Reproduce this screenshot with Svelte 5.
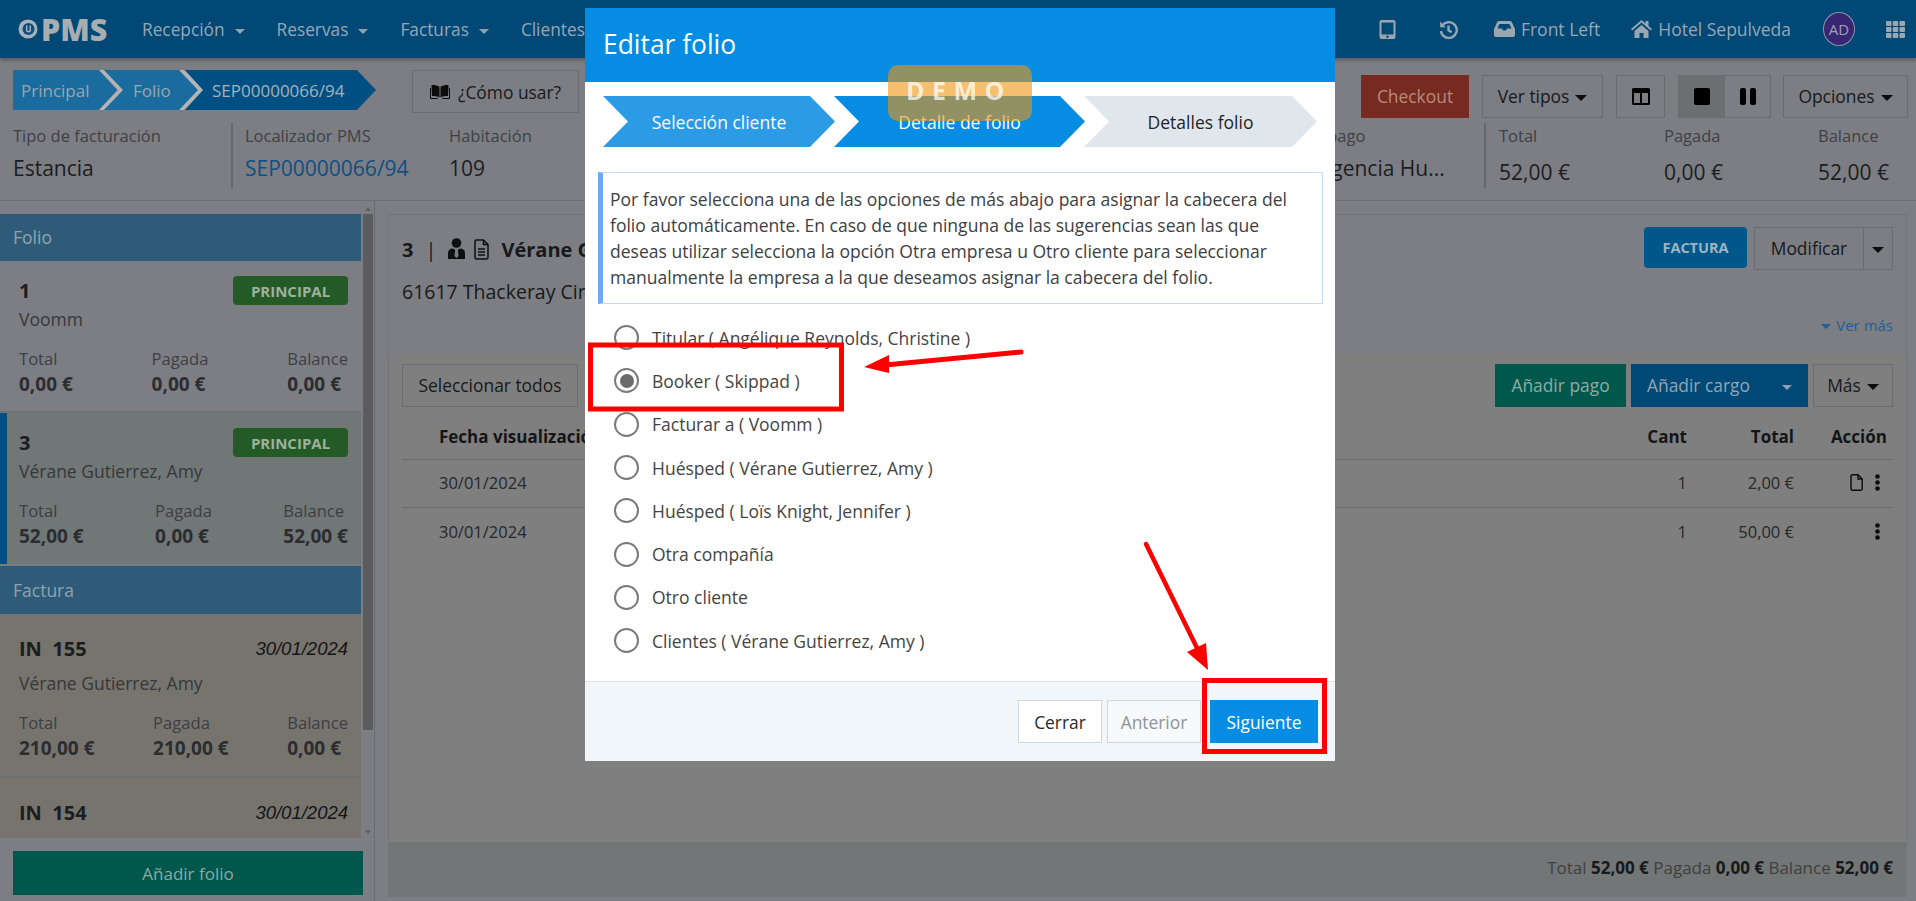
<script>
  const menu = ['Recepción', 'Reservas', 'Facturas'];
  const options = [
    'Titular ( Angélique Reynolds, Christine )',
    'Booker ( Skippad )',
    'Facturar a ( Voomm )',
    'Huésped ( Vérane Gutierrez, Amy )',
    'Huésped ( Loïs Knight, Jennifer )',
    'Otra compañía',
    'Otro cliente',
    'Clientes ( Vérane Gutierrez, Amy )'
  ];
  const folios = [
    { n: '1', name: 'Voomm', total: '0,00 €', paid: '0,00 €', bal: '0,00 €', active: false },
    { n: '3', name: 'Vérane Gutierrez, Amy', total: '52,00 €', paid: '0,00 €', bal: '52,00 €', active: true }
  ];
  const rows = [
    { qty: '1', total: '2,00 €', file: true },
    { qty: '1', total: '50,00 €', file: false }
  ];
</script>

<div class="app">
  <header class="nav">
    <div class="logo">
      <svg width="20" height="20" viewBox="0 0 20 20"><circle cx="10" cy="10" r="9.500" fill="#aab0b6"/><circle cx="10.500" cy="10" r="6" fill="#0a4f7e"/><path d="M8 6.500v4.500a2.500 2.500 0 0 0 5 0V6.500h-1.400v4.500a1.100 1.100 0 0 1-2.200 0V6.500z" fill="#aab0b6"/></svg>
      <span>PMS</span>
    </div>
    <nav class="menu">
      {#each menu as m}<span class="menu-item">{m}<i class="caret light"></i></span>{/each}
      <span class="menu-item">Clientes</span>
    </nav>
    <div class="nav-right">
      <svg class="tablet" width="17" height="19" viewBox="0 0 17 19"><path fill="#9aa6b0" fill-rule="evenodd" d="M2.500 0h12A2 2 0 0 1 16.500 2v15a2 2 0 0 1-2 2h-12a2 2 0 0 1-2-2V2a2 2 0 0 1 2-2zM2.500 2.500v12h12v-12zM8.500 15.500a1.200 1.200 0 1 0 0 2.400 1.200 1.200 0 0 0 0-2.400z"/></svg>
      <svg class="hist" width="19" height="19" viewBox="0 0 24 24" fill="none" stroke="#9aa6b0" stroke-width="3"><path d="M4.500 6.500A10 10 0 1 1 2.500 14"/><path d="M1.500 2v7h7z" fill="#9aa6b0" stroke="none"/><path d="M12 7v6l4 2.500"/></svg>
      <span class="nav-txt front"><svg width="21" height="16" viewBox="0 0 21 16"><path fill="#9aa6b0" fill-rule="evenodd" d="M5 0h11c.8 0 1.400.4 1.800 1.100L21 8v6a2 2 0 0 1-2 2H2a2 2 0 0 1-2-2V8l3.200-6.900C3.600.4 4.200 0 5 0zM5.500 3L3.500 7.500h4.500l1.200 2h2.600l1.200-2h4.500L15.500 3z"/></svg>Front Left</span>
      <span class="nav-txt hotel"><svg width="21" height="18" viewBox="0 0 21 18"><path fill="#9aa6b0" d="M10.500 0L0 9l1.200 1.400L10.500 2.600l9.300 7.800L21 9l-3.500-3V1h-3v2.500zM3.500 11v7h5v-5h4v5h5v-7l-7-6z"/></svg>Hotel Sepulveda</span>
      <span class="avatar">AD</span>
      <svg class="grid-ic" width="19" height="17" viewBox="0 0 19 17"><g fill="#9aa6b0"><rect width="5.500" height="5" rx="1"/><rect x="6.750" width="5.500" height="5" rx="1"/><rect x="13.500" width="5.500" height="5" rx="1"/><rect y="6" width="5.500" height="5" rx="1"/><rect x="6.750" y="6" width="5.500" height="5" rx="1"/><rect x="13.500" y="6" width="5.500" height="5" rx="1"/><rect y="12" width="5.500" height="5" rx="1"/><rect x="6.750" y="12" width="5.500" height="5" rx="1"/><rect x="13.500" y="12" width="5.500" height="5" rx="1"/></g></svg>
    </div>
  </header>

  <section class="sub">
    <div class="toolbar">
      <div class="crumbs">
        <span class="crumb c1">Principal</span>
        <i class="sep s-a"></i>
        <span class="crumb c2">Folio</span>
        <i class="sep s-b"></i>
        <span class="crumb c3">SEP00000066/94</span>
      </div>
      <button class="btn how">
        <svg width="20" height="14" viewBox="0 0 20 14"><path fill="#0c0c0c" d="M1.500 0C4 0 7.500.3 9.500 1.800V12.500C7.500 11.300 4.500 11 2 11zM18.500 0C16 0 12.500.3 10.500 1.800V12.500c2-1.200 5-1.500 7.500-1.500z"/><path fill="none" stroke="#0c0c0c" d="M.5 3v10.500h7M19.500 3v10.500h-7"/></svg>
        ¿Cómo usar?
      </button>
      <div class="tools">
        <button class="btn checkout">Checkout</button>
        <button class="btn vt">Ver tipos<i class="caret"></i></button>
        <button class="btn ic">
          <svg width="18" height="17" viewBox="0 0 18 17"><path fill="#000" fill-rule="evenodd" d="M1.500 0h15A1.500 1.500 0 0 1 18 1.500v14a1.500 1.500 0 0 1-1.500 1.500h-15A1.500 1.500 0 0 1 0 15.500v-14A1.500 1.500 0 0 1 1.500 0zM2 5v10h6V5zM10 5v10h6V5z"/></svg>
        </button>
        <div class="group">
          <button class="btn g1"><span class="square"></span></button>
          <button class="btn g2"><span class="bar"></span><span class="bar"></span></button>
        </div>
        <button class="btn op">Opciones<i class="caret"></i></button>
      </div>
    </div>
    <div class="info">
      <div class="cell tipo"><small>Tipo de facturación</small><b>Estancia</b></div>
      <div class="cell loc"><small>Localizador PMS</small><b class="link">SEP00000066/94</b></div>
      <div class="cell hab"><small>Habitación</small><b>109</b></div>
      <div class="cell pago"><small>Tipo de pago</small><b>Agencia Hu...</b></div>
      <div class="cell tot"><small>Total</small><b>52,00 €</b></div>
      <div class="cell pag"><small>Pagada</small><b>0,00 €</b></div>
      <div class="cell bal"><small>Balance</small><b>52,00 €</b></div>
    </div>
  </section>

  <div class="body">
    <aside class="side">
      <div class="list">
        <h4>Folio</h4>
        {#each folios as f}
          <article class="card folio" class:active={f.active}>
            <div class="top"><strong>{f.n}</strong><span class="badge">PRINCIPAL</span></div>
            <div class="who">{f.name}</div>
            <div class="nums">
              <div><small>Total</small><b>{f.total}</b></div>
              <div><small>Pagada</small><b>{f.paid}</b></div>
              <div><small>Balance</small><b>{f.bal}</b></div>
            </div>
          </article>
        {/each}
        <h4 class="fact">Factura</h4>
        <article class="card inv">
          <div class="top"><strong>IN&nbsp; 155</strong><em>30/01/2024</em></div>
          <div class="who">Vérane Gutierrez, Amy</div>
          <div class="nums">
            <div><small>Total</small><b>210,00 €</b></div>
            <div><small>Pagada</small><b>210,00 €</b></div>
            <div><small>Balance</small><b>0,00 €</b></div>
          </div>
        </article>
        <article class="card inv last">
          <div class="top"><strong>IN&nbsp; 154</strong><em>30/01/2024</em></div>
        </article>
      </div>
      <div class="scroll"><i class="up"></i><span class="thumb"></span><i class="down"></i></div>
      <button class="add">Añadir folio</button>
    </aside>

    <main class="panel">
      <div class="p-top">
        <div class="p-head">
          <div class="title">
            <span>3</span><span class="pipe">|</span>
            <svg width="17" height="22" viewBox="0 0 17 22"><circle cx="8.500" cy="5" r="4.800" fill="#0e0f11"/><path fill="#0e0f11" d="M0 21v-6c0-3 2-4.500 5-4.500l2.200 1.500L6.500 18 8.500 20l2-2-.7-6L12 10.500c3 0 5 1.500 5 4.500v6z"/></svg>
            <svg width="15" height="21" viewBox="0 0 15 21" fill="none" stroke="#0e0f11" stroke-width="1.500"><path d="M1 2.500A1.500 1.500 0 0 1 2.500 1H9.500L14 5.500V18.500A1.500 1.500 0 0 1 12.500 20h-10A1.500 1.500 0 0 1 1 18.500z"/><path d="M9.500 1v4.500H14M4 10h7M4 13h7M4 16h7"/></svg>
            <span class="nm">Vérane Gutierrez</span>
          </div>
          <div class="p-actions">
            <button class="factura">FACTURA</button>
            <div class="split"><button class="btn mod">Modificar</button><button class="btn mc"><i class="caret"></i></button></div>
          </div>
        </div>
        <div class="addr">61617 Thackeray Circle</div>
        <div class="more"><i class="caret blue"></i>Ver más</div>
      </div>
      <div class="p-bottom">
        <div class="p-tools">
          <button class="btn sel">Seleccionar todos</button>
          <div class="p-right">
            <button class="pay">Añadir pago</button>
            <button class="charge">Añadir cargo<i class="caret light"></i></button>
            <button class="btn mas">Más<i class="caret"></i></button>
          </div>
        </div>
        <div class="table">
          <div class="tr th"><span></span><span>Fecha visualización</span><span class="r">Cant</span><span class="r">Total</span><span class="r act">Acción</span></div>
          {#each rows as r}
            <div class="tr">
              <span></span><span>30/01/2024</span><span class="r">{r.qty}</span><span class="r">{r.total}</span>
              <span class="icons">
                {#if r.file}
                  <svg width="13" height="17" viewBox="0 0 13 17" fill="none" stroke="#0b0b0b" stroke-width="1.400"><path d="M1 2A1.300 1.300 0 0 1 2.300.8H8L12.200 5V15A1.300 1.300 0 0 1 11 16.200H2.300A1.300 1.300 0 0 1 1 15z"/><path d="M8 .8V5H12.200"/></svg>
                {/if}
                <svg width="5" height="17" viewBox="0 0 5 17" fill="#0b0b0b"><circle cx="2.500" cy="2.500" r="2.300"/><circle cx="2.500" cy="8.500" r="2.300"/><circle cx="2.500" cy="14.500" r="2.300"/></svg>
              </span>
            </div>
          {/each}
        </div>
        <div class="p-foot">Total <b>52,00 €</b> Pagada <b>0,00 €</b> Balance <b>52,00 €</b></div>
      </div>
    </main>
  </div>

  <div class="modal">
    <div class="m-head">Editar folio</div>
    <div class="steps">
      <div class="step s1">Selección cliente</div>
      <div class="step s2">Detalle de folio</div>
      <div class="step s3">Detalles folio</div>
    </div>
    <p class="note">Por favor selecciona una de las opciones de más abajo para asignar la cabecera del folio automáticamente. En caso de que ninguna de las sugerencias sean las que deseas utilizar selecciona la opción Otra empresa u Otro cliente para seleccionar manualmente la empresa a la que deseamos asignar la cabecera del folio.</p>
    <div class="opts">
      {#each options as o, i}
        <div class="opt"><span class="radio" class:on={i === 1}></span>{o}</div>
      {/each}
    </div>
    <div class="m-foot">
      <button class="mb">Cerrar</button>
      <button class="mb off">Anterior</button>
      <button class="mb next">Siguiente</button>
    </div>
  </div>

  <div class="demo">D E M O</div>

  <svg class="marks" width="1916" height="901" viewBox="0 0 1916 901">
    <rect x="590.500" y="345" width="251" height="64" fill="none" stroke="#fe0000" stroke-width="5"/>
    <rect x="1204.500" y="680.500" width="120" height="71" fill="none" stroke="#fe0000" stroke-width="5"/>
    <path d="M1021 352L885 365" stroke="#fe0000" stroke-width="5" stroke-linecap="round"/>
    <path d="M864 367L889 355V373z" fill="#fe0000"/>
    <path d="M1146 544L1198 650" stroke="#fe0000" stroke-width="4.500" stroke-linecap="round"/>
    <path d="M1208 670L1187 652L1206 643z" fill="#fe0000"/>
  </svg>
</div>

<style>
  :global(body) { margin: 0; background: #7d7e83; }
  * { box-sizing: border-box; }
  .app { width: 1916px; height: 901px; overflow: hidden; position: relative; font-family: "Open Sans", "Noto Sans", sans-serif; font-size: 16.500px; color: #1b1d20; background: #7d7e83; }
  button { font-family: inherit; font-size: 17.400px; cursor: pointer; }
  h4 { margin: 0; font-weight: 400; }
  .caret { display: inline-block; width: 0; height: 0; border-left: 6px solid transparent; border-right: 6px solid transparent; border-top: 6px solid #0d0d0d; margin-left: 6px; vertical-align: 2px; }
  .caret.light { border-top-color: #8fa0ae; border-left-width: 5px; border-right-width: 5px; border-top-width: 5px; margin-left: 10px; }
  .caret.blue { border-top-color: #1f5f95; border-left-width: 5px; border-right-width: 5px; border-top-width: 5px; margin: 0 5px 0 0; }

  .nav { height: 58px; background: #004876; display: flex; align-items: center; box-shadow: 0 2px 4px rgba(0,0,0,.3); position: relative; color: #99a7b3; padding-left: 18px; }
  .logo { display: flex; align-items: center; gap: 3px; width: 124px; }
  .logo span { font-size: 30.500px; font-weight: 800; color: #a8adb2; line-height: 34px; }
  .menu { display: flex; gap: 32px; }
  .menu-item { font-size: 17.300px; white-space: nowrap; }
  .nav-right { margin-left: auto; display: flex; align-items: center; }
  .tablet { margin-right: 43px; }
  .hist { margin-right: 36px; }
  .nav-txt { display: inline-flex; align-items: center; gap: 6px; font-size: 17.500px; white-space: nowrap; }
  .front { margin-right: 31px; }
  .hotel { margin-right: 32px; }
  .avatar { width: 32px; height: 34px; border-radius: 50%; background: #382672; border: 1.500px solid #8f95a0; color: #9f9db8; font-size: 15px; display: flex; align-items: center; justify-content: center; margin-right: 31px; }
  .grid-ic { margin-right: 11px; }

  .sub { height: 143px; border-bottom: 1px solid #6e6f72; padding: 0 8px 0 13px; }
  .toolbar { height: 65px; display: flex; align-items: flex-start; }
  .crumbs { display: flex; margin-top: 12px; height: 40px; width: 363px; }
  .crumb { height: 40px; display: flex; align-items: center; font-size: 17px; color: #9aa5ae; }
  .sep { height: 40px; width: 25px; background: #b2b3b6; flex: none; clip-path: polygon(0 0, 5px 0, 25px 50%, 5px 100%, 0 100%, 19px 50%); }
  .s-a { margin: 0 -24px 0 -18px; }
  .s-b { margin: 0 -24px 0 -19px; }
  .c1 { width: 104px; padding-left: 8px; background: #1a6c9f; clip-path: polygon(0 0, 86px 0, 104px 50%, 86px 100%, 0 100%); }
  .c2 { width: 94px; margin-left: 4px; padding-left: 29px; background: #1a6c9f; clip-path: polygon(0 0, 76px 0, 94px 50%, 76px 100%, 0 100%, 19px 50%); }
  .c3 { width: 191px; margin-left: 5px; padding-left: 27px; background: #004f83; color: #a8b2ba; clip-path: polygon(0 0, 172px 0, 191px 50%, 172px 100%, 0 100%, 18px 50%); }
  .btn { background: transparent; border: 1px solid #6c6d70; color: #17191b; height: 43px; padding: 0 0 2px; white-space: nowrap; }
  .how { margin: 12px 0 0 36px; width: 167px; height: 43px; padding: 0; display: flex; align-items: center; justify-content: center; gap: 8px; }
  .tools { margin-left: auto; display: flex; margin-top: 17px; height: 43px; }
  .checkout { width: 108px; border: 0; background: #762a20; color: #b58a7e; margin-right: 13px; }
  .vt { width: 121px; margin-right: 13px; }
  .ic { width: 49px; margin-right: 13px; display: flex; align-items: center; justify-content: center; padding: 0; }
  .group { display: flex; width: 93px; margin-right: 12px; }
  .g1 { width: 47px; background: #6d6e70; display: flex; align-items: center; justify-content: center; padding: 0; }
  .g2 { width: 46px; border-left: 0; display: flex; align-items: center; justify-content: center; gap: 4px; padding: 0; }
  .square { width: 16px; height: 17px; background: #000; border-radius: 2px; }
  .bar { width: 6px; height: 17px; background: #000; border-radius: 2px; }
  .op { width: 125px; }
  .info { display: flex; height: 65px; }
  .cell { display: flex; flex-direction: column; flex: none; }
  .cell small { font-size: 16.500px; color: #3e4145; line-height: 26px; white-space: nowrap; }
  .cell b { font-weight: 400; font-size: 21px; line-height: 32px; margin-top: 3px; white-space: nowrap; }
  .link { color: #0f4f85; }
  .tipo { width: 218px; }
  .loc { width: 218px; border-left: 2px solid #67686b; padding-left: 12px; }
  .hab { width: 869px; }
  .pago { width: 166px; }
  .pago small { margin-left: -52px; }
  .tot { width: 180px; border-left: 2px solid #67686b; padding-left: 13px; }
  .pag { width: 154px; }
  .bal { width: 90px; }
  .tot b, .pag b, .bal b { margin-top: 7px; }

  .body { display: flex; height: 700px; }
  .side { width: 375px; flex: none; border-right: 1px solid #6c6d70; position: relative; padding-top: 13px; }
  .list { width: 361px; height: 625px; overflow: hidden; }
  h4 { height: 47px; background: #2e5c78; color: #92a3ae; font-size: 17.500px; line-height: 46px; padding-left: 13px; }
  .fact { height: 48px; line-height: 48px; }
  .card { padding: 15px 13px 0 19px; height: 152px; border-bottom: 2px solid #6f7174; }
  .folio.active { background: #717676; box-shadow: inset 7px 0 0 #004f82; height: 153px; border-bottom-color: #777c7c; }
  .top { display: flex; justify-content: space-between; align-items: center; height: 29px; }
  .top strong { font-size: 20px; font-weight: 700; color: #1b1d20; }
  .badge { width: 115px; height: 29px; border-radius: 4px; background: #235a25; color: #9fb09f; font-size: 15px; font-weight: 700; display: flex; align-items: center; justify-content: center; }
  .who { font-size: 17.500px; color: #35383b; line-height: 29px; }
  .nums { display: flex; justify-content: space-between; margin-top: 11px; }
  .nums small { display: block; font-size: 16.600px; color: #3c3f43; line-height: 27px; }
  .nums b { display: block; font-size: 19px; font-weight: 700; color: #2b2d30; line-height: 24px; }
  .inv { background: #77746e; height: 164px; padding-top: 20px; }
  .inv .who { margin-top: 6px; }
  .inv.last { height: 60px; border: 0; }
  .top em { font-family: "Liberation Sans", sans-serif; font-size: 18.500px; color: #141517; }
  .scroll { position: absolute; left: 363px; top: 0; width: 11px; height: 636px; }
  .thumb { position: absolute; left: 0; top: 13px; width: 10px; height: 516px; background: #5c5c5f; }
  .up, .down { position: absolute; left: 2px; width: 0; height: 0; border-left: 3.500px solid transparent; border-right: 3.500px solid transparent; }
  .up { top: 6px; border-bottom: 4px solid #5e5f62; }
  .down { top: 629px; border-top: 4px solid #5e5f62; }
  .add { position: absolute; left: 13px; top: 650px; width: 350px; height: 44px; border: 0; background: #00584c; color: #8fa8a3; font-size: 17px; }

  .panel { width: 1519px; margin: 13px 0 4px 13px; border: 1px solid #747578; background: #7f7f7f; display: flex; flex-direction: column; }
  .p-top { height: 139px; padding: 12px 13px 0; background: #7d7e83; }
  .p-head { display: flex; justify-content: space-between; height: 42px; }
  .title { display: flex; align-items: center; font-size: 20px; font-weight: 700; gap: 10px; height: 44px; color: #17191b; }
  .pipe { font-weight: 400; margin: 0 2px; }
  .title svg + svg { margin-left: -1px; }
  .nm { margin-left: 2px; }
  .p-actions { display: flex; gap: 7px; }
  .factura { width: 103px; height: 41px; border: 0; border-radius: 4px; background: #00588a; color: #9fb4c2; font-size: 14.500px; font-weight: 700; }
  .split { display: flex; }
  .mod { width: 110px; }
  .mc { width: 29px; border-left: 0; }
  .mc .caret { margin: 0; }
  .addr { font-size: 19.500px; margin-top: 10px; line-height: 26px; color: #17191b; white-space: nowrap; }
  .more { text-align: right; color: #1f5f95; font-size: 15px; margin-top: 9px; line-height: 22px; }
  .p-bottom { flex: 1; display: flex; flex-direction: column; }
  .p-tools { display: flex; justify-content: space-between; margin: 10px 13px 0; }
  .sel { width: 176px; }
  .p-right { display: flex; gap: 5px; }
  .pay { width: 131px; height: 43px; border: 0; background: #00584c; color: #91a9a3; padding: 0 0 2px; }
  .charge { width: 177px; height: 43px; border: 0; background: #004876; color: #93a5b2; text-align: left; padding: 0 0 2px 16px; white-space: nowrap; }
  .charge .caret { margin-left: 32px; }
  .mas { width: 80px; }
  .table { margin: 6px 13px 0; }
  .tr { display: grid; grid-template-columns: 37px 1fr 100px 107px 99px; height: 48px; align-items: center; border-bottom: 1px solid #6b6c6e; color: #26282b; padding-bottom: 2px; }
  .tr:last-child { border-bottom: 0; }
  .th { height: 47px; font-weight: 700; font-size: 17px; color: #141517; white-space: nowrap; padding-bottom: 0; }
  .r { text-align: right; }
  .act { padding-right: 6px; }
  .icons { display: flex; justify-content: flex-end; align-items: center; gap: 12px; padding-right: 13px; }
  .p-foot { margin-top: auto; height: 54px; background: #727676; text-align: right; line-height: 52px; padding-right: 13px; color: #403f3e; font-size: 17px; }
  .p-foot b { color: #17191b; }

  .modal { position: absolute; left: 585px; top: 8px; width: 750px; height: 753px; background: #fff; display: flex; flex-direction: column; color: #333; }
  .m-head { height: 74px; background: #068de3; color: #fff; font-size: 26.400px; line-height: 72px; padding-left: 18px; }
  .steps { display: flex; margin: 14px 0 0 18px; }
  .step { height: 51px; display: flex; align-items: center; justify-content: center; font-size: 17.500px; margin-right: -1px; clip-path: polygon(0 0, calc(100% - 25px) 0, 100% 50%, calc(100% - 25px) 100%, 0 100%, 25px 50%); }
  .s1 { width: 232px; background: #2b9be6; color: #fff; }
  .s2 { width: 251px; background: #068de3; color: #fff; }
  .s3 { width: 233px; background: #dfe7ec; color: #1f2326; }
  .note { margin: 25px 12px 0 13px; height: 132px; padding: 13px 20px 0 7px; border: 1px solid #c5dafa; border-left: 5px solid #6ea8fe; font-size: 17.550px; line-height: 26px; color: #3d4043; }
  .opts { margin: 12px 0 0 29px; }
  .opt { height: 43.300px; display: flex; align-items: center; gap: 13px; font-size: 17.500px; color: #444; }
  .radio { width: 25px; height: 25px; border-radius: 50%; border: 2px solid #7a7a7a; background: #fff; flex: none; position: relative; }
  .radio.on::after { content: ""; position: absolute; inset: 3.500px; border-radius: 50%; background: #6b6b6b; }
  .m-foot { margin-top: auto; height: 80px; background: #f1f6fa; border-top: 1px solid #dfe5ea; display: flex; justify-content: flex-end; align-items: flex-start; padding: 18px 17px 0 0; gap: 5px; }
  .mb { height: 43px; width: 84px; background: #fff; border: 1px solid #cfd6dc; color: #26292c; }
  .off { width: 94px; background: #f7f9fb; color: #8f9498; margin-right: 4px; }
  .next { width: 108px; background: #068de3; border: 0; color: #fff; }

  .demo { position: absolute; left: 888px; top: 65px; width: 144px; height: 56px; border-radius: 10px; background: rgba(238,148,15,.6); color: rgba(255,255,255,.72); font-size: 25px; font-weight: 700; line-height: 28px; padding: 11px 9px 0 0; text-align: center; white-space: nowrap; letter-spacing: .5px; }
  .marks { position: absolute; left: 0; top: 0; pointer-events: none; }
</style>
